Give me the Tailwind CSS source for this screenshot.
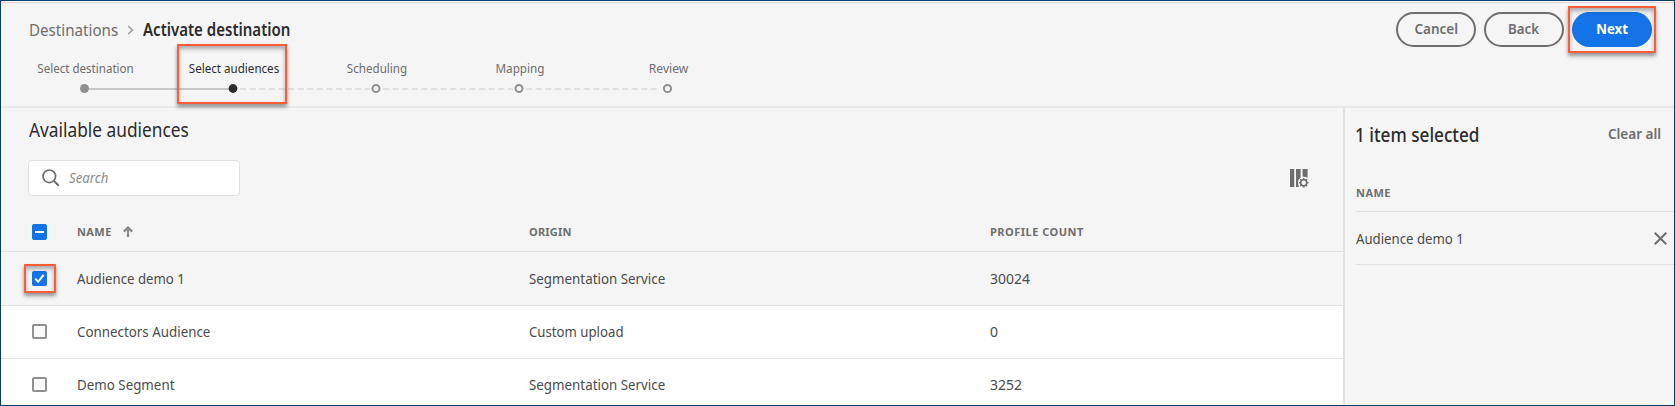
<!DOCTYPE html>
<html lang="en">
<head>
<meta charset="utf-8">
<title>Activate destination</title>
<script src="https://cdn.jsdelivr.net/npm/@tailwindcss/browser@4"></script>
</head>
<body class="h-[406px] w-[1675px] overflow-hidden font-['Noto_Sans',sans-serif] text-[15px] leading-5 text-[#4b4b4b]">
<div class="flex h-full flex-col border border-[#003f6b] bg-[#f5f5f5] shadow-[inset_1px_1px_0_#fff]">
  <header class="relative h-[107px] shrink-0 border-b-2 border-[#e8e8e8]">
    <div class="mt-px h-px bg-[#e4d0d8]"></div>
    <div class="flex items-start justify-between pl-[28px] pr-[22px]">
      <nav class="flex items-center pt-[17px] text-[17px]">
        <span class="w-[98px] origin-left scale-x-[0.89] whitespace-nowrap text-[#6e6e6e]">Destinations</span>
        <svg class="h-[10px] w-[7px] shrink-0" viewBox="0 0 7 10" fill="none" stroke="#a0a0a0" stroke-width="1.7"><path d="M1.2 1 5.4 5 1.2 9"/></svg>
        <span class="ml-[9px] origin-left scale-x-[0.884] whitespace-nowrap font-semibold text-[#2c2c2c]">Activate destination</span>
      </nav>
      <div class="flex gap-2 pt-[9px] font-semibold text-[#6e6e6e]">
        <button class="h-[35px] w-20 rounded-full border-2 border-[#6e6e6e] pb-[3px]"><span class="inline-block scale-x-[0.9]">Cancel</span></button>
        <button class="h-[35px] w-20 rounded-full border-2 border-[#6e6e6e] pb-[3px]"><span class="inline-block scale-x-[0.89]">Back</span></button>
        <button class="h-[35px] w-20 rounded-full bg-[#1473e6] pb-[3px] font-bold text-white"><span class="inline-block scale-x-[0.88]">Next</span></button>
      </div>
    </div>
    <div class="mt-[11px] ml-[9px] text-[13px] text-[#6e6e6e]">
      <div class="flex pl-px text-center whitespace-nowrap">
        <span class="w-[149px] scale-x-[0.89]">Select destination</span>
        <span class="w-[148px] scale-x-[0.893] text-[#2c2c2c]">Select audiences</span>
        <span class="w-[138px] scale-x-[0.895]">Scheduling</span>
        <span class="w-[148px] scale-x-[0.9]">Mapping</span>
        <span class="w-[149px] scale-x-[0.93]">Review</span>
      </div>
      <svg class="mt-[5px] block h-[11px] w-[732px]" viewBox="10 83 732 11" fill="none" stroke-width="2">
        <path d="M89 89H229" stroke="#c8c8c8"/>
        <path d="M240 89H370M383 89H513M526 89H660" stroke="#e1e1e1" stroke-dasharray="6.2 3.4"/>
        <circle cx="84.5" cy="88.5" r="4.5" fill="#909090"/>
        <circle cx="233" cy="88.5" r="4.4" fill="#2c2c2c"/>
        <g stroke="#909090"><circle cx="376" cy="88.5" r="3.5"/><circle cx="519" cy="88.5" r="3.5"/><circle cx="667.5" cy="88.5" r="3.6"/></g>
      </svg>
    </div>
    <div class="absolute top-[43px] left-[176px] h-[60px] w-[110px] border-2 border-[#ff5c35] shadow-[0_3px_4px_rgba(0,0,0,.4),inset_0_3px_4px_rgba(0,0,0,.3)]"></div>
    <div class="absolute top-[5px] left-[1567px] h-[47px] w-[88px] border-2 border-[#ff5c35] shadow-[0_3px_4px_rgba(0,0,0,.4),inset_0_3px_4px_rgba(0,0,0,.3)]"></div>
  </header>
  <div class="flex min-h-0 flex-1">
    <main class="flex w-[1342px] flex-col overflow-hidden">
      <h1 class="mt-[12px] ml-[28px] w-fit origin-left scale-x-[0.91] text-[19px] leading-5 text-[#2c2c2c]">Available audiences</h1>
      <div class="mt-5 flex h-9 items-center justify-between pr-[34px] pl-[27px]">
        <div class="flex h-9 w-[212px] items-center rounded border border-[#e1e1e1] bg-white pl-[13px]">
          <svg class="h-[18px] w-[18px]" viewBox="0 0 18 18" fill="none" stroke="#6e6e6e"><circle cx="7.3" cy="7.3" r="6.3" stroke-width="1.7"/><path d="m11.8 11.8 5 5" stroke-width="2"/></svg>
          <span class="ml-[9px] origin-left scale-x-[0.88] pb-[2px] italic text-[#8a8a8a]">Search</span>
        </div>
        <svg class="h-5 w-5" viewBox="0 0 20 20" fill="#6e6e6e"><path d="M1 1H5.2V19H1zM7 1H11.6V9.6Q9 11.4 9 14.8 9 17 10 19H7zM13.6 1H18.6V9.8Q16.5 8.4 13.6 8.7z"/><circle cx="14.7" cy="14.7" r="3" fill="none" stroke="#6e6e6e" stroke-width="1.5"/><g stroke="#6e6e6e" stroke-width="1.6"><path d="M14.7 9.9v1.8M14.7 17.7v1.8M9.9 14.7h1.8M17.7 14.7h1.8M11.3 11.3l1.3 1.3M16.8 16.8l1.3 1.3M11.3 18.1l1.3-1.3M16.8 12.6l1.3-1.3"/></g></svg>
      </div>
      <div class="mt-4 flex h-10 shrink-0 items-center border-b border-[#e1e1e1] pl-[31px] text-[11px] font-bold text-[#6e6e6e]">
        <span class="mr-[30px] flex h-4 w-[15px] items-center justify-center rounded-[2px] bg-[#1473e6]"><i class="h-[2px] w-[9px] bg-white"></i></span>
        <span class="flex w-[452px] items-center gap-[11px] tracking-[0.4px]">NAME
          <svg class="h-[11px] w-[10px]" viewBox="0 0 10 11" fill="none" stroke="#8a8a8a" stroke-width="2.2"><path d="M5 11V1.6M.8 5.6 5 1.4l4.2 4.2"/></svg></span>
        <span class="w-[461px] tracking-[0.2px]">ORIGIN</span>
        <span class="tracking-[0.5px]">PROFILE COUNT</span>
      </div>
      <div class="relative flex h-[54px] shrink-0 items-center border-b border-[#e1e1e1] pb-[2px] pl-[31px]">
        <span class="mt-px mr-[30px] h-[15px] w-[15px] rounded-[2px] bg-[#1473e6]"><svg class="h-[15px] w-[15px]" viewBox="0 0 15 15" fill="none" stroke="#fff" stroke-width="2"><path d="m3.2 7.6 3 3.2 5.4-7"/></svg></span>
        <span class="w-[452px] origin-left scale-x-[0.88]">Audience demo 1</span>
        <span class="w-[461px] origin-left scale-x-[0.89]">Segmentation Service</span>
        <span class="origin-left scale-x-[0.93]">30024</span>
        <div class="absolute top-[12px] left-[23px] h-[29px] w-8 border-2 border-[#ff5c35] shadow-[0_3px_4px_rgba(0,0,0,.4),inset_0_3px_4px_rgba(0,0,0,.3)]"></div>
      </div>
      <div class="flex h-[53px] shrink-0 items-center border-b border-[#e1e1e1] bg-white pb-[2px] pl-[31px]">
        <span class="mr-[30px] h-[15px] w-[15px] rounded-[2px] border-2 border-[#909090] bg-[#fafafa]"></span>
        <span class="w-[452px] origin-left scale-x-[0.89]">Connectors Audience</span>
        <span class="w-[461px] origin-left scale-x-[0.88]">Custom upload</span>
        <span class="origin-left scale-x-[0.93]">0</span>
      </div>
      <div class="flex h-[53px] shrink-0 items-center bg-white pb-[3px] pl-[31px]">
        <span class="mr-[30px] h-[15px] w-[15px] rounded-[2px] border-2 border-[#909090] bg-[#fafafa]"></span>
        <span class="w-[452px] origin-left scale-x-[0.89]">Demo Segment</span>
        <span class="w-[461px] origin-left scale-x-[0.89]">Segmentation Service</span>
        <span class="origin-left scale-x-[0.93]">3252</span>
      </div>
    </main>
    <aside class="flex-1 border-l-2 border-[#e1e1e1] pl-[11px]">
      <div class="flex items-start justify-between pr-[13px]">
        <h2 class="mt-[17px] -ml-px origin-left scale-x-[0.905] text-[19px] leading-5 font-medium text-[#2c2c2c]">1 item selected</h2>
        <span class="mt-[15px] origin-right scale-x-[0.9] font-semibold text-[#6e6e6e]">Clear all</span>
      </div>
      <div class="mt-[30px] flex h-[37px] items-center border-b border-[#e1e1e1] pb-[1px] text-[11px] font-bold tracking-[0.45px] text-[#6e6e6e]">NAME</div>
      <div class="flex h-[53px] items-center justify-between border-b border-[#e1e1e1] pr-[7px]">
        <span class="origin-left scale-x-[0.88]">Audience demo 1</span>
        <svg class="h-[13px] w-[13px]" viewBox="0 0 12 12" stroke="#6e6e6e" stroke-width="1.9"><path d="m.7.7 10.6 10.6M11.3.7.7 11.3"/></svg>
      </div>
    </aside>
  </div>
</div>
</body>
</html>
